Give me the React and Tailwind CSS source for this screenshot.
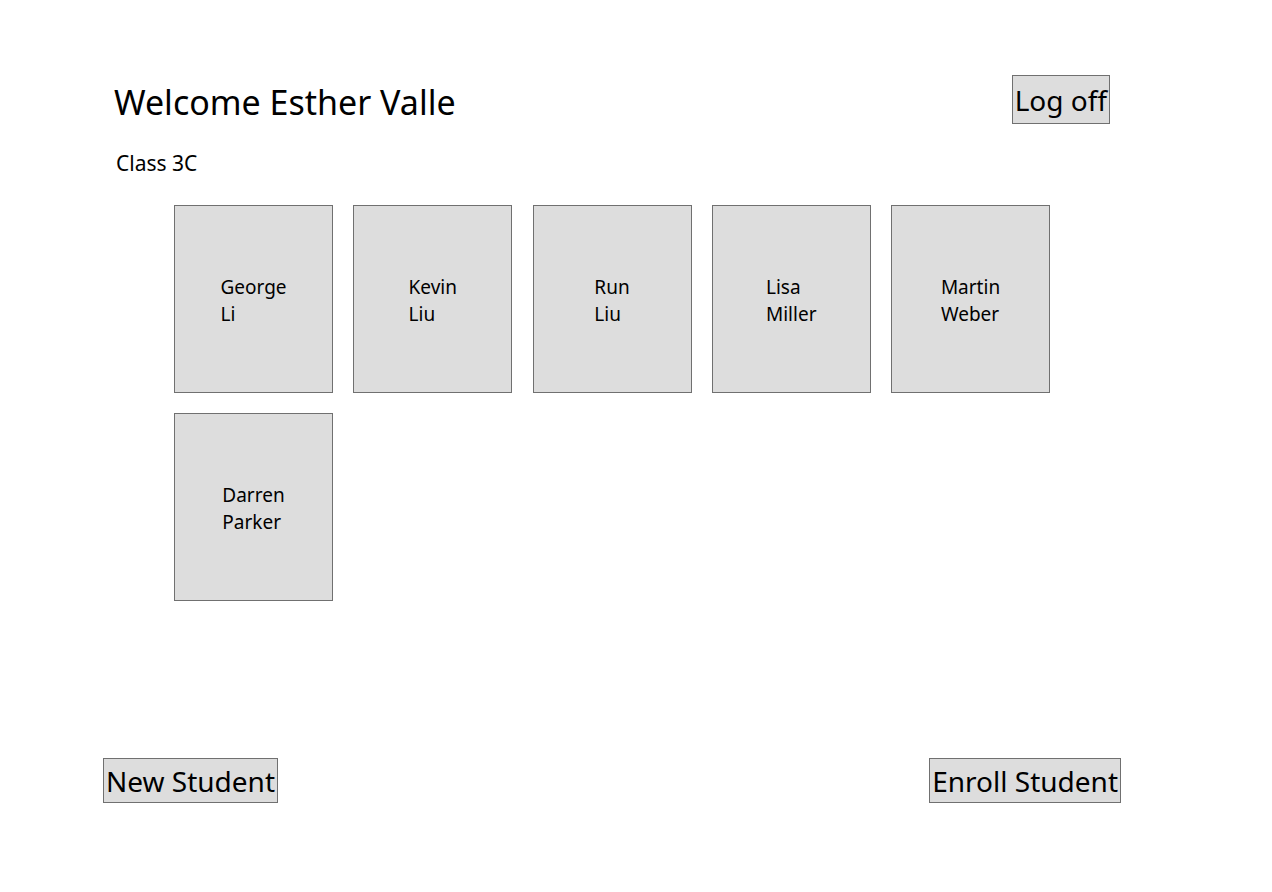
import React from "react";

const students = [
  ["George", "Li"],
  ["Kevin", "Liu"],
  ["Run", "Liu"],
  ["Lisa", "Miller"],
  ["Martin", "Weber"],
  ["Darren", "Parker"],
];

export default function App() {
  return (
    <div
      className="w-[1272px] h-[892px] bg-white text-black relative"
      style={{ fontFamily: '"Noto Sans", "Open Sans", sans-serif' }}
    >
      <div className="flex flex-col h-full">
        <div className="flex items-start justify-between pt-[75px] pl-[114px] pr-[162px]">
          <h1 className="text-[34px] leading-[48px] mt-[3px]">Welcome Esther Valle</h1>
          <button className="h-[49px] px-[2px] bg-[#dddddd] border border-[#707070] text-[28px] leading-[44px]">
            Log off
          </button>
        </div>
        <div className="pl-[116px] mt-[24px] text-[21px] leading-[26px]">Class 3C</div>
        <div className="pl-[174px] mt-[29px] grid grid-cols-[repeat(5,159px)] gap-x-[20.25px] gap-y-[20px] w-max">
          {students.map(([f, l]) => (
            <div
              key={f}
              className="w-[159px] h-[188px] bg-[#dddddd] border border-[#707070] flex items-center justify-center pt-[4px]"
            >
              <div className="text-[19px] leading-[27px]">
                <div>{f}</div>
                <div>{l}</div>
              </div>
            </div>
          ))}
        </div>
        <div className="flex-1" />
        <div className="flex justify-between pl-[103px] pr-[151px] pb-[89px]">
          <button className="h-[45px] px-[2px] bg-[#dddddd] border border-[#707070] text-[28px] leading-[42px]">
            New Student
          </button>
          <button className="h-[45px] px-[2px] bg-[#dddddd] border border-[#707070] text-[28px] leading-[42px]">
            Enroll Student
          </button>
        </div>
      </div>
    </div>
  );
}
